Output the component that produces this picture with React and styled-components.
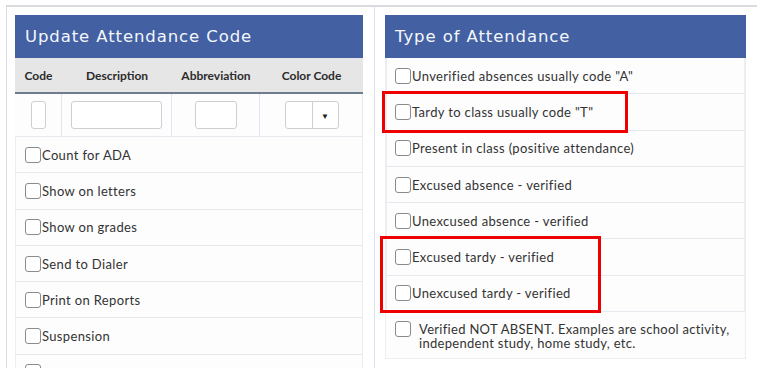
import React from 'react';
import styled, { createGlobalStyle } from 'styled-components';

const GlobalStyle = createGlobalStyle`
  body {
    margin: 0;
    background: #fff;
    font-family: Lato, "Open Sans", sans-serif;
    color: #333;
  }
`;

const codeOptions = [
  'Count for ADA',
  'Show on letters',
  'Show on grades',
  'Send to Dialer',
  'Print on Reports',
  'Suspension',
  '',
];

const attendanceTypes = [
  'Unverified absences usually code "A"',
  'Tardy to class usually code "T"',
  'Present in class (positive attendance)',
  'Excused absence - verified',
  'Unexcused absence - verified',
  'Excused tardy - verified',
  'Unexcused tardy - verified',
];

const App = () => {
  return (
    <>
      <GlobalStyle />
      <Page>
        <LeftColumn>
          <Panel>
            <PanelHeader>Update Attendance Code</PanelHeader>
            <TableHead>
              <HeadCell>Code</HeadCell>
              <HeadCell>Description</HeadCell>
              <HeadCell>Abbreviation</HeadCell>
              <HeadCell>Color Code</HeadCell>
            </TableHead>
            <InputRow>
              <InputCell>
                <TextBox width={13} />
              </InputCell>
              <InputCell>
                <TextBox width={89} />
              </InputCell>
              <InputCell>
                <TextBox width={40} />
              </InputCell>
              <InputCell>
                <ColorSelect>
                  <Swatch />
                  <Caret>▼</Caret>
                </ColorSelect>
              </InputCell>
            </InputRow>
            {codeOptions.map((label, i) => (
              <CheckRow key={i}>
                <Box />
                {label}
              </CheckRow>
            ))}
          </Panel>
        </LeftColumn>
        <RightColumn>
          <Panel>
            <PanelHeader>Type of Attendance</PanelHeader>
            <List>
              {attendanceTypes.map((label) => (
                <CheckRow key={label} $inset={8}>
                  <Box />
                  {label}
                </CheckRow>
              ))}
              <TallRow>
                <Box />
                <Wrapped>
                  Verified NOT ABSENT. Examples are school activity,
                  independent study, home study, etc.
                </Wrapped>
              </TallRow>
            </List>
            <Highlight $left={-3} $top={76} $width={246} $height={42} />
            <Highlight $left={-5} $top={221} $width={221} $height={77} />
          </Panel>
        </RightColumn>
      </Page>
    </>
  );
};

export default App;

const Page = styled.div`
  display: flex;
  margin: 5px 0 0 6px;
  border-top: 2px solid #dadbde;
  border-left: 1px solid #dadbde;
  height: 361px;
  overflow: hidden;
`;

const LeftColumn = styled.div`
  width: 348px;
  padding: 8px 11px 0 8px;
  border-right: 1px solid #d8e3ef;
`;

const RightColumn = styled.div`
  width: 361px;
  padding: 8px 0 0 10px;
`;

const Panel = styled.div`
  position: relative;
  background: #fdfdfd;
`;

const PanelHeader = styled.div`
  height: 43px;
  background: #4361a2;
  color: #f4f7fc;
  font-family: "DejaVu Sans", sans-serif;
  font-size: 16.5px;
  letter-spacing: 0.9px;
  display: flex;
  align-items: center;
  padding-left: 10px;
  box-sizing: border-box;
`;

const TableHead = styled.div`
  display: grid;
  grid-template-columns: 47px 110px 88px 103px;
  height: 34px;
  background: #e6e6e6;
  border-bottom: 2px solid #6e7c92;
`;

const HeadCell = styled.div`
  display: flex;
  align-items: center;
  justify-content: center;
  font-size: 12px;
  font-weight: 700;
  color: #2c2c2c;
`;

const InputRow = styled.div`
  display: grid;
  grid-template-columns: 47px 110px 88px 103px;
  height: 42px;
  border-bottom: 1px solid #e6e9ee;
  border-right: 1px solid #e6e9ee;
`;

const InputCell = styled.div`
  display: flex;
  align-items: center;
  justify-content: center;
  border-right: 1px solid #dfe8f2;

  &:last-child {
    border-right: none;
  }
`;

const TextBox = styled.div`
  width: ${(p) => p.width}px;
  height: 26px;
  border: 1px solid #cfcfcf;
  border-radius: 3px;
  background: #fff;
`;

const ColorSelect = styled.div`
  display: flex;
  width: 52px;
  height: 26px;
  border: 1px solid #cfcfcf;
  border-radius: 3px;
  background: #fff;
`;

const Swatch = styled.div`
  width: 26px;
  border-right: 1px solid #cfcfcf;
`;

const Caret = styled.div`
  flex: 1;
  display: flex;
  align-items: center;
  justify-content: center;
  font-size: 8px;
  color: #1a1a1a;
  padding-top: 2px;
`;

const List = styled.div`
  border-left: 1px solid #eceef1;
  border-right: 1px solid #eceef1;
  border-bottom: 1px solid #eceef1;
`;

const CheckRow = styled.div`
  display: flex;
  align-items: center;
  height: 36.3px;
  box-sizing: border-box;
  padding-left: ${(p) => p.$inset ?? 9}px;
  border-bottom: 1px solid #e6e9ee;
  border-left: 1px solid #eceef1;
  border-right: 1px solid #eceef1;
  font-size: 13px;
  letter-spacing: 0.35px;
  color: #333;
  white-space: nowrap;
`;

const TallRow = styled.div`
  display: flex;
  align-items: flex-start;
  height: 46px;
  box-sizing: border-box;
  padding: 9px 0 0 9px;
  font-size: 13px;
  letter-spacing: 0.3px;
  color: #333;
`;

const Wrapped = styled.div`
  margin-left: 7px;
  line-height: 14px;
  padding-top: 1px;
`;

const Box = styled.span`
  flex: none;
  width: 14px;
  height: 14px;
  border: 1px solid #8a8a8a;
  border-radius: 3px;
  background: #fff;
  margin-right: 1px;
`;

const Highlight = styled.div`
  position: absolute;
  left: ${(p) => p.$left}px;
  top: ${(p) => p.$top}px;
  width: ${(p) => p.$width}px;
  height: ${(p) => p.$height}px;
  box-sizing: border-box;
  border: 3px solid #ee0000;
  pointer-events: none;
`;
